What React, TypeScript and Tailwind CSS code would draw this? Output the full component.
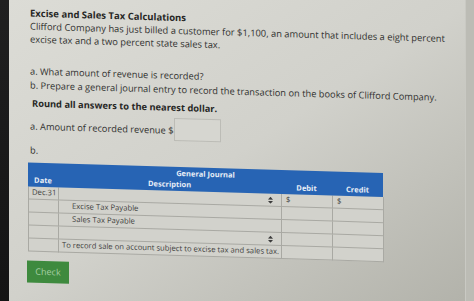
import React from "react";

const Arrows = () => (
  <svg width="5" height="7" viewBox="0 0 5 7" className="block">
    <path d="M2.5 0 L5 2.8 L0 2.8 Z" fill="#3a3a3a" />
    <path d="M2.5 7 L5 4.2 L0 4.2 Z" fill="#3a3a3a" />
  </svg>
);

const cell = "border-r border-b border-[#a9a9a3] h-[13px] flex items-center text-[7.7px] text-[#444442] leading-none";

export default function App() {
  const rows = [
    { date: "Dec.31", desc: "", select: true, dollar: true },
    { date: "", desc: "Excise Tax Payable", indent: true },
    { date: "", desc: "Sales Tax Payable", indent: true },
    { date: "", desc: "", select: true },
    { date: "", desc: "To record sale on account subject to excise tax and sales tax.", note: true },
  ];
  return (
    <div
      className="w-[474px] h-[301px] overflow-hidden flex"
      style={{ fontFamily: '"Open Sans", "Noto Sans", sans-serif' }}
    >
      <div className="w-[9px] shrink-0 bg-linear-to-b from-[#202020] to-[#141414]" />
      <div className="flex-1 relative bg-linear-to-br from-[#dcdcd6] via-[#d1d1cb] to-[#b2b2aa]">
        <div className="absolute top-0 bottom-0 left-[456px] w-[9px] bg-[#bcbcb5] border-l border-[#c9c9c3]" />
        <div className="origin-top-left skew-y-[1.7deg] pl-[21px] pt-[7px] text-[#333331]">
          <div className="text-[9.5px] leading-[12px] font-bold text-[#262624]">
            Excise and Sales Tax Calculations
          </div>
          <div className="text-[9.35px] leading-[13px] whitespace-nowrap">
            Clifford Company has just billed a customer for $1,100, an amount that includes a eight percent
            <br />
            excise tax and a two percent state sales tax.
          </div>
          <div className="mt-[19px] text-[9.3px] leading-[14px] whitespace-nowrap">
            a. What amount of revenue is recorded?
          </div>
          <div className="text-[9.3px] leading-[14px] whitespace-nowrap">
            b. Prepare a general journal entry to record the transaction on the books of Clifford Company.
          </div>
          <div className="mt-[4px] pl-[2px] text-[9.3px] leading-[14px] font-bold text-[#262624] whitespace-nowrap">
            Round all answers to the nearest dollar.
          </div>
          <div className="mt-[3px] flex items-center h-[23px] text-[9.3px] whitespace-nowrap">
            <span className="mt-[2px]">a. Amount of recorded revenue $</span>
            <div className="ml-[1px] w-[47px] h-[23px] border border-[#bcbcb6] bg-[#d6d6d0]" />
          </div>
          <div className="mt-[7px] text-[9.3px] leading-[14px]">b.</div>
          <div className="mt-[5px] -ml-[2px] w-[355px]">
            <div className="h-[24px] bg-[#2764b4] text-[#e8eef7] font-bold text-[7.5px] leading-none relative">
              <div className="absolute left-0 right-0 top-[3px] text-center">General Journal</div>
              <div className="grid grid-cols-[30px_223px_51px_51px] absolute left-0 right-0 top-[14px]">
                <div className="text-center">Date</div>
                <div className="text-center">Description</div>
                <div className="text-center">Debit</div>
                <div className="text-center">Credit</div>
              </div>
            </div>
            <div className="grid grid-cols-[30px_223px_51px_51px] border-l border-[#a9a9a3] bg-[#d2d2cc]">
              {rows.map((r, i) => (
                <React.Fragment key={i}>
                  <div className={`${cell} pl-[3px]`}>{r.date}</div>
                  <div className={`${cell} justify-between ${r.indent ? "pl-[13px]" : "pl-[3px]"} pr-[8px] whitespace-nowrap`}>
                    <span>{r.desc}</span>
                    {r.select ? <Arrows /> : null}
                  </div>
                  <div className={`${cell} pl-[4px]`}>{r.dollar ? "$" : ""}</div>
                  <div className={`${cell} pl-[4px]`}>{r.dollar ? "$" : ""}</div>
                </React.Fragment>
              ))}
            </div>
          </div>
          <div className="mt-[9px] -ml-[3px] w-[42px] h-[22px] bg-[#3e8a3e] flex items-center justify-center text-[9px] text-[#a8cfa4]">
            Check
          </div>
        </div>
      </div>
    </div>
  );
}
